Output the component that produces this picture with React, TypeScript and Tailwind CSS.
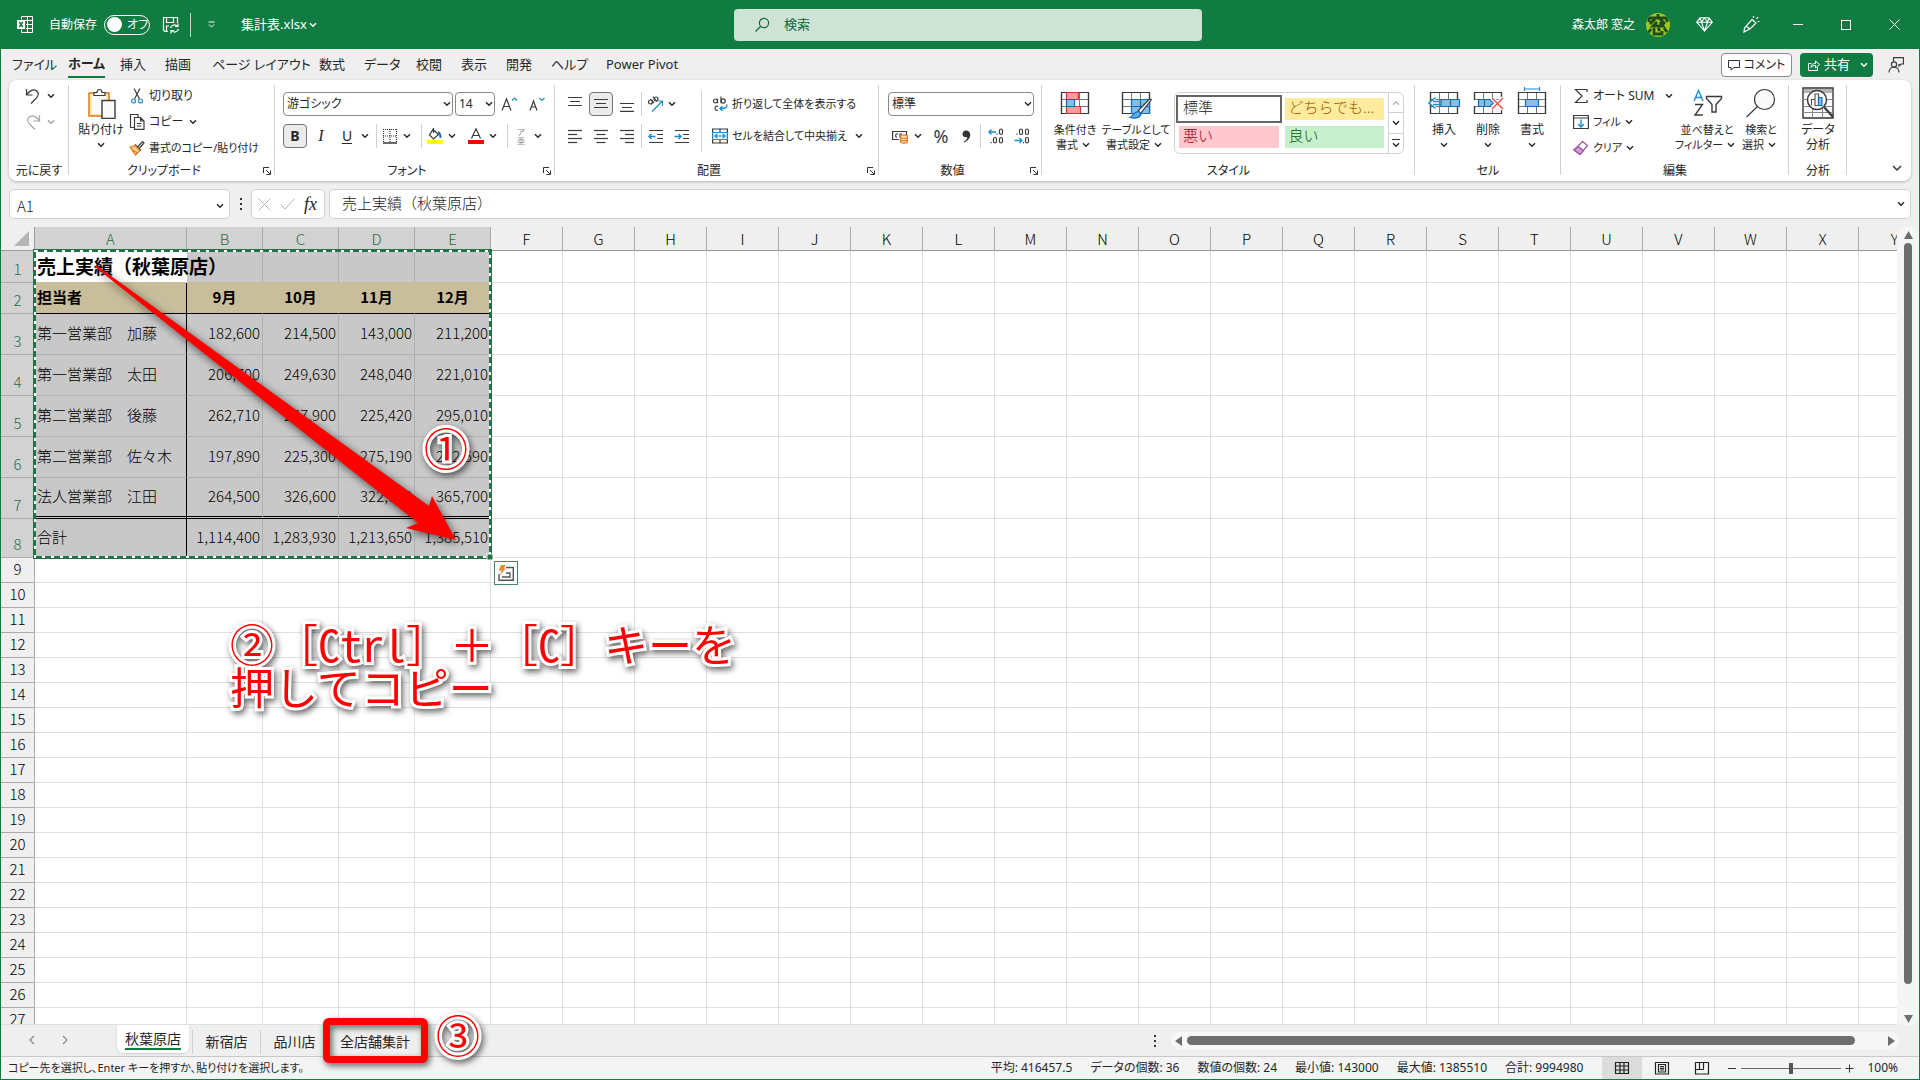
import type { ReactNode } from "react";
import clsx from "clsx";

const tabs = [
  { name: "ファイル", width: "w-14" },
  { name: "ホーム", width: "w-[52px]" },
  { name: "挿入", width: "w-[45px]" },
  { name: "描画", width: "w-[47px]" },
  { name: "ページ レイアウト", width: "w-[107px]" },
  { name: "数式", width: "w-[45px]" },
  { name: "データ", width: "w-[52px]" },
  { name: "校閲", width: "w-[45px]" },
  { name: "表示", width: "w-[45px]" },
  { name: "開発", width: "w-[45px]" },
  { name: "ヘルプ", width: "w-[55px]" },
  { name: "Power Pivot", width: "w-24" },
];

const columns = "ABCDEFGHIJKLMNOPQRSTUVWXY".split("");

const rows: string[][] = [
  ["売上実績（秋葉原店）"],
  ["担当者", "9月", "10月", "11月", "12月"],
  ["第一営業部　加藤", "182,600", "214,500", "143,000", "211,200"],
  ["第一営業部　太田", "206,700", "249,630", "248,040", "221,010"],
  ["第二営業部　後藤", "262,710", "267,900", "225,420", "295,010"],
  ["第二営業部　佐々木", "197,890", "225,300", "275,190", "292,590"],
  ["法人営業部　江田", "264,500", "326,600", "322,000", "365,700"],
  ["合計", "1,114,400", "1,283,930", "1,213,650", "1,385,510"],
];

const stats = ["平均: 416457.5", "データの個数: 36", "数値の個数: 24", "最小値: 143000", "最大値: 1385510", "合計: 9994980"];

function rowHeight(row: number) {
  if (row === 1) return "h-8";
  if (row === 2) return "h-[31px]";
  if (row <= 7) return "h-[41px]";
  if (row === 8) return "h-[39px]";
  return "h-[25px]";
}

function Chev({ className = "w-4" }: { className?: string }) {
  return (
    <span className={clsx("flex shrink-0 justify-center", className)}>
      <svg width="8" height="6" viewBox="0 0 8 6" fill="none" stroke="currentColor" strokeWidth="1.4">
        <path d="M1 1.2l3 3 3-3" />
      </svg>
    </span>
  );
}

function Icon({ size = 16, children }: { size?: number; children: ReactNode }) {
  return (
    <svg className="shrink-0" width={size} height={size} viewBox={`0 0 ${size} ${size}`} fill="none" stroke="#3b3b3b" strokeWidth="1.2">
      {children}
    </svg>
  );
}

function Sep({ className = "mx-[5px]" }: { className?: string }) {
  return <span className={clsx("h-6 w-px shrink-0 bg-[#d1d1d1]", className)} />;
}

function Group({ label, width, launcher, children }: { label: string; width: string; launcher?: boolean; children: ReactNode }) {
  return (
    <section className={clsx("relative mt-[3px] flex shrink-0 flex-col", width)} aria-label={label}>
      <div className="flex h-[82px]">{children}</div>
      <div className={clsx("flex h-3 items-center justify-center whitespace-nowrap", launcher && "pr-4")}>{label}</div>
      {launcher && (
        <button className="absolute right-1 top-[84px]" aria-label={`${label}の設定`}>
          <svg width="8" height="8" viewBox="0 0 8 8" fill="none" stroke="#333">
            <path d="M.5 6V.5H6M3 3l4 4M7.5 3.5v4h-4" />
          </svg>
        </button>
      )}
      <span className="absolute right-0 top-[2px] h-[90px] w-px bg-[#d1d1d1]" />
    </section>
  );
}

function BigButton({ lines, width, chevron, children }: { lines: string[]; width: string; chevron?: "below" | "inline"; children: ReactNode }) {
  return (
    <button
      className={clsx("flex shrink-0 flex-col items-center whitespace-nowrap pt-1 leading-[15px]", chevron === "inline" && "text-[11px]", width)}
    >
      <Icon size={32}>{children}</Icon>
      <span className="mt-[3px]">{lines[0]}</span>
      {lines[1] && (
        <span className="flex items-center">
          {lines[1]}
          {chevron === "inline" && <Chev />}
        </span>
      )}
      {chevron === "below" && (
        <span className="flex h-[15px] items-center">
          <Chev />
        </span>
      )}
    </button>
  );
}

function IconButton({ label, width = "w-6", active, children }: { label: string; width?: string; active?: boolean; children: ReactNode }) {
  return (
    <button
      aria-label={label}
      className={clsx("flex h-6 shrink-0 items-center justify-center", width, active && "rounded border border-[#767676] bg-[#ebebeb]")}
    >
      {children}
    </button>
  );
}

function Combo({ label, value, width }: { label: string; value: string; width: string }) {
  return (
    <div className={clsx("relative shrink-0", width)}>
      <select aria-label={label} className="h-6 w-full appearance-none rounded border border-[#8a8a8a] bg-white pl-[3px] pr-3 leading-5">
        <option>{value}</option>
      </select>
      <span className="pointer-events-none absolute right-0 top-[9px]">
        <Chev className="w-3" />
      </span>
    </div>
  );
}

function TitleBar() {
  return (
    <header className="flex h-[49px] shrink-0 items-center bg-[#107c41] text-white">
      <div className="flex flex-1 items-center pl-4">
        <svg width="16" height="17" viewBox="0 0 16 17" fill="none" stroke="#fff">
          <path d="M4.5 3.500V.5h11v16h-11v-3M4.500 4.500h11M10.500.5v16M9 8.500h6.500M9 12.500h6.500" />
          <path fill="#fff" stroke="none" d="M0 4h8v9H0z" />
          <path stroke="#107c41" strokeWidth="1.500" d="M2.300 6l3.500 5M5.800 6l-3.500 5" />
        </svg>
        <label className="ml-4 flex items-center gap-[7px]">
          自動保存
          <input type="checkbox" role="switch" className="peer sr-only" />
          <span className="flex h-5 w-[46px] items-center gap-[5px] rounded-full border border-white pl-[2px]">
            <span className="size-[15px] rounded-full bg-white" />
            オフ
          </span>
        </label>
        <button className="ml-3" aria-label="上書き保存">
          <svg width="18" height="18" viewBox="0 0 18 18" fill="none" stroke="#fff" strokeWidth="1.200">
            <path d="M6 15.500H3L1.500 14V1.500h14V7M4.500 1.500v5h7v-5M4.500 15v-5H7" />
            <path d="M8.500 12a4 4 0 017-1.500M16 7.500v3h-3M16.500 13a4 4 0 01-7 1.500M9 17.500v-3h3" />
          </svg>
        </button>
        <Sep className="ml-[10px] mr-3" />
        <button className="w-4" aria-label="クイック アクセス ツール バーのカスタマイズ">
          <svg className="mx-auto" width="7" height="7" viewBox="0 0 7 7" fill="none" stroke="#fff">
            <path d="M.5 1h6M1 3.500l2.500 2.500L6 3.500" />
          </svg>
        </button>
        <button className="ml-[22px] flex items-center text-[13px]">
          集計表.xlsx
          <Chev className="w-3" />
        </button>
      </div>
      <label className="flex h-8 w-[468px] items-center gap-[14px] rounded bg-[#cfe2d6] pl-5 text-[#0e6937]">
        <Icon>
          <g stroke="#0e6937">
            <circle cx="10" cy="6" r="4.600" />
            <path d="M6.500 9.500L1.500 14.500" />
          </g>
        </Icon>
        <input aria-label="検索" placeholder="検索" className="flex-1 bg-transparent text-[13px] placeholder:text-[#0e6937]" />
      </label>
      <div className="flex flex-1 items-center justify-end">
        <span>森太郎 窓之</span>
        <span className="ml-[11px] flex size-6 items-center justify-center overflow-hidden rounded-full bg-[#9bc827]">
          <svg width="24" height="24" viewBox="0 0 24 24" fill="none" stroke="#1f4a1c" strokeWidth="2.800">
            <path d="M3 9V5h18v4M12 1v4M9 6l-5 5M14 6l5 5M11 9l-4 4h10l-3-4M5 16l-3 4M8 15v6h8v-3M12 15l2 3M18 15l3 4" />
          </svg>
        </span>
        <button className="ml-[26px]" aria-label="プレミアム">
          <svg width="17" height="15" viewBox="0 0 17 15" fill="none" stroke="#fff" strokeWidth="1.100">
            <path d="M4 .8h9l3.300 4.400L8.500 14 .7 5.200zM.7 5.200h15.600M4 .8l1.500 4.400 3 8.800 3-8.800L13 .8M5.500 5.200l3-4.400 3 4.400" />
          </svg>
        </button>
        <button className="ml-[30px]" aria-label="新機能">
          <svg width="17" height="17" viewBox="0 0 17 17" fill="none" stroke="#fff" strokeWidth="1.200">
            <path d="M9 3.500l4 3.500-5.500 5.500-6.500 3.500.5-4zM3 10l4 3M10.500 2V0M13.500 3l1.500-2M14.500 5.500h2" />
          </svg>
        </button>
        <button className="ml-[33px] h-px w-[10px] bg-white" aria-label="最小化" />
        <button className="ml-[38px] size-[10px] border border-white" aria-label="元のサイズ" />
        <button className="ml-[38px] mr-[19px]" aria-label="閉じる">
          <svg width="11" height="11" viewBox="0 0 11 11" stroke="#fff">
            <path d="M.5.5l10 10M10.500.5l-10 10" />
          </svg>
        </button>
      </div>
    </header>
  );
}

function TabBar() {
  return (
    <nav className="flex h-[31px] shrink-0 items-center pl-[11px] text-[13px]">
      {tabs.map((tab) => (
        <button key={tab.name} className={clsx("flex shrink-0 whitespace-nowrap", tab.width)}>
          <span className={clsx("pb-[2px] pt-[3px]", tab.name === "ホーム" && "border-b-2 border-[#107c41] font-bold")}>{tab.name}</span>
        </button>
      ))}
      <div className="ml-auto flex items-center pr-[15px]">
        <button className="flex h-6 w-[71px] items-center justify-center gap-1 rounded border border-[#8a8a8a] bg-white text-[12px]">
          <svg width="12" height="12" viewBox="0 0 12 12" fill="none" stroke="#333">
            <path d="M.5 1.500h11v7H6l-3 2.500V8.500H.5z" />
          </svg>
          コメント
        </button>
        <button className="ml-2 flex h-6 w-[73px] items-center rounded bg-[#107c41] pl-2 text-white">
          <svg width="12" height="12" viewBox="0 0 12 12" fill="none" stroke="#fff">
            <path d="M3.500 4.500h-3v7h9v-3M3 8.500c0-3 2-4 4.500-4V2l4 3.500-4 3.500V6.500C5.500 6.500 4 7 3 8.500z" />
          </svg>
          <span className="ml-1">共有</span>
          <Chev className="ml-auto w-[18px]" />
        </button>
        <button className="ml-[15px]" aria-label="フィードバック">
          <Icon>
            <path d="M5.500 4.500V.6h10V7H13l-2 2V7" />
            <circle cx="6" cy="7.500" r="2.600" />
            <path d="M1 15.500c0-7 10-7 10 0" />
          </Icon>
        </button>
      </div>
    </nav>
  );
}

function GridLines() {
  return (
    <>
      <path fill="#fff" d="M2.500 5.500h27v21h-27z" />
      <path stroke="#777" strokeWidth="1" d="M2.500 12.500h27M2.500 19.500h27M11.500 5.500v21M20.500 5.500v21" />
      <path strokeWidth="1.200" d="M2.500 5.500h27v21h-27z" />
    </>
  );
}

function AlignIcon({ widths, offset = "center" }: { widths: number[]; offset?: "left" | "center" | "right" }) {
  return (
    <Icon>
      {widths.map((w, i) => {
        const x = offset === "left" ? 1 : offset === "right" ? 15 - w : 8 - w / 2;
        return <path key={i} d={`M${x} ${2.5 + i * 4}h${w}`} />;
      })}
    </Icon>
  );
}

function Ribbon() {
  return (
    <div className="mx-2 flex h-[101px] shrink-0 rounded-lg bg-white text-[12px] shadow-[0_1px_3px_rgba(0,0,0,0.25)]">
      <Group label="元に戻す" width="w-[60px]">
        <div className="flex flex-col pl-4">
          <button className="flex h-[26px] items-center" aria-label="元に戻す">
            <Icon>
              <path d="M1.500 1v6h6M1.500 7C4 3 8 .8 11 2.500c4 2.500 2 6-.5 8.500L6 15.500" />
            </Icon>
            <Chev className="w-5" />
          </button>
          <button className="flex h-[26px] items-center text-[#a6a6a6]" aria-label="やり直し">
            <Icon>
              <path stroke="#a6a6a6" d="M14.500 1v6h-6M14.500 7C12 3 8 .8 5 2.500c-4 2.500-2 6 .5 8.500L10 15.500" />
            </Icon>
            <Chev className="w-5" />
          </button>
        </div>
      </Group>

      <Group label="クリップボード" width="w-[206px]" launcher>
        <BigButton lines={["貼り付け"]} width="w-16" chevron="below">
          <path fill="#fde9a9" stroke="#e07b1a" strokeWidth="1.500" d="M4 6h20v23H4z" />
          <path fill="#fafafa" stroke="none" d="M7 8h14v19H7z" />
          <path fill="#fafafa" d="M9 8.500V5.500h3c0-4 5-4 5 0h3v3z" />
          <path fill="#fafafa" strokeWidth="1.400" d="M17 13.500h13v18H17z" />
        </BigButton>
        <div className="-ml-1 flex flex-col">
          <button className="flex h-[26px] items-center gap-1 whitespace-nowrap">
            <Icon>
              <path d="M5 .5l5.500 10.500M11 .5L5.500 11" />
              <circle cx="4.500" cy="13" r="2" stroke="#1e8bcd" />
              <circle cx="11.500" cy="13" r="2" stroke="#1e8bcd" />
            </Icon>
            切り取り
          </button>
          <button className="flex h-[26px] items-center gap-1 whitespace-nowrap">
            <Icon>
              <path d="M5 13.500H1.500v-13H9V3" />
              <path d="M5.500 3.500h6l3.500 3.500v8.400H5.500zM11.500 3.500V7H15M8 9.500h4.500M8 12h4.500" />
            </Icon>
            コピー
            <Chev className="w-3" />
          </button>
          <button className="flex h-[26px] items-center gap-1 whitespace-nowrap text-[11px]">
            <Icon>
              <path d="M9 6.500L13.500 1.500l1.500 1.500-4.500 5M6 4.500l6 6" />
              <path fill="#fbd08f" stroke="#e07b1a" d="M1 7l5-1.500 5 5L6.500 15zM3 10l5 2.500" />
            </Icon>
            書式のコピー/貼り付け
          </button>
        </div>
      </Group>

      <Group label="フォント" width="w-[280px]" launcher>
        <div className="flex flex-col pl-2 pt-[5px]">
          <div className="flex h-8 items-center">
            <Combo label="フォント" value="游ゴシック" width="w-[170px]" />
            <span className="w-[2px]" />
            <Combo label="フォント サイズ" value="14" width="w-10" />
            <IconButton label="フォント サイズの拡大" width="w-7">
              <Icon size={18}>
                <path d="M2 15.500L6.500 4 11 15.500M3.500 11.500h6" />
                <path stroke="#1e8bcd" d="M12 5.500l2.500-2.500L17 5.500" />
              </Icon>
            </IconButton>
            <IconButton label="フォント サイズの縮小" width="w-7">
              <Icon size={18}>
                <path d="M2 15.500L5.500 6 9 15.500M3.200 12h4.600" />
                <path stroke="#1e8bcd" d="M11.500 3l2.500 2.500L16.500 3" />
              </Icon>
            </IconButton>
          </div>
          <div className="flex h-8 items-center">
            <IconButton label="太字" active>
              <span className="text-sm font-bold">B</span>
            </IconButton>
            <IconButton label="斜体" width="w-7">
              <span className="font-['Liberation_Serif',serif] text-base italic">I</span>
            </IconButton>
            <IconButton label="下線">
              <span className="text-sm underline underline-offset-2">U</span>
            </IconButton>
            <Chev className="w-3" />
            <Sep />
            <Icon>
              <path strokeDasharray="1 1" d="M1.500 1v13M14.500 1v13M8 1v13M1 1.500h14M1 8h14" />
              <path strokeWidth="1.500" d="M1 15h14" />
            </Icon>
            <Chev className="w-[18px]" />
            <Sep />
            <Icon>
              <path d="M6 1.500l5.500 5-5 4.500L2.500 7zM6.500 5V0" />
              <path stroke="#1e6fb8" strokeWidth="2" d="M11 4c2 1 2.500 3 2.500 6" />
              <path fill="#ff0" stroke="none" d="M0 12h16v4H0z" />
            </Icon>
            <Chev className="w-[18px]" />
            <span className="w-[7px]" />
            <Icon>
              <path d="M3.500 10.500L8 .8l4.500 9.700M5 7.500h6" />
              <path fill="red" stroke="none" d="M0 12h16v4H0z" />
            </Icon>
            <Chev className="w-[18px]" />
            <Sep />
            <IconButton label="ふりがな" width="w-4">
              <span className="flex flex-col text-center text-[8px] leading-[9px] text-[#8a8a8a]">
                <span>ア</span>
                <span>亜</span>
              </span>
            </IconButton>
            <Chev className="w-[18px]" />
          </div>
        </div>
      </Group>

      <Group label="配置" width="w-[324px]" launcher>
        <div className="flex w-[146px] flex-col pl-2 pt-[5px]">
          <div className="flex h-8 items-center">
            <div className="flex gap-[2px]">
              <IconButton label="上揃え">
                <Icon>
                  <path d="M1 1.500h14M3 5.500h10M1 9.500h14" />
                </Icon>
              </IconButton>
              <IconButton label="上下中央揃え" active>
                <Icon>
                  <path d="M1 3.500h14M3 7.500h10M1 11.500h14" />
                </Icon>
              </IconButton>
              <IconButton label="下揃え">
                <Icon>
                  <path d="M1 7.500h14M3 11.500h10M1 15.400h14" />
                </Icon>
              </IconButton>
            </div>
            <Sep className="mx-[2px]" />
            <IconButton label="方向" width="w-[22px]">
              <Icon>
                <circle cx="3.500" cy="6" r="2" />
                <path d="M3.500 3l3.500 4M6 .5l4 5" />
                <circle cx="9" cy="3" r="2" />
                <path stroke="#1e8bcd" d="M5 15.500L15 5.500M10.500 5H15.500v5" />
              </Icon>
            </IconButton>
            <Chev className="w-3" />
          </div>
          <div className="flex h-8 items-center">
            <div className="flex gap-[2px]">
              <IconButton label="左揃え">
                <AlignIcon widths={[14, 9, 14, 9]} offset="left" />
              </IconButton>
              <IconButton label="中央揃え">
                <AlignIcon widths={[14, 9, 14, 9]} />
              </IconButton>
              <IconButton label="右揃え">
                <AlignIcon widths={[14, 9, 14, 9]} offset="right" />
              </IconButton>
            </div>
            <Sep className="mx-[2px]" />
            <div className="flex gap-[2px]">
              <IconButton label="インデントを減らす">
                <Icon>
                  <path d="M1 2.500h14M9 6.500h6M9 10.500h6M1 14.500h14" />
                  <path stroke="#1e8bcd" strokeWidth="1.400" d="M7.500 8.500H1M3.500 6L1 8.500 3.500 11" />
                </Icon>
              </IconButton>
              <IconButton label="インデントを増やす">
                <Icon>
                  <path d="M1 2.500h14M9 6.500h6M9 10.500h6M1 14.500h14" />
                  <path stroke="#1e8bcd" strokeWidth="1.400" d="M.5 8.500H7M4.500 6L7 8.500 4.500 11" />
                </Icon>
              </IconButton>
            </div>
          </div>
        </div>
        <div className="mt-2 h-[61px] w-px bg-[#d1d1d1]" />
        <div className="flex flex-col pl-[10px] pt-[5px] text-[11px]">
          <button className="flex h-8 items-center gap-1 whitespace-nowrap">
            <Icon>
              <circle cx="3.500" cy="5" r="2" />
              <path d="M5.500 2.800v4.500M9 .5v6.800M6 10.500c-4-2-4 5.500 0 3.500" />
              <circle cx="11.200" cy="5" r="2.100" />
              <path stroke="#1e8bcd" strokeWidth="1.400" d="M15 8.500c0 4-2 4-7 4M10.500 10L8 12.500l2.500 2.500" />
            </Icon>
            折り返して全体を表示する
          </button>
          <button className="flex h-8 items-center gap-1 whitespace-nowrap">
            <Icon>
              <path d="M.6 1h14.800v14H.6zM.6 4.500h14.800M.6 11.500h14.800M8 1v3.500M8 11.500V15" />
              <path fill="#eaf4fb" stroke="#1e8bcd" d="M.6 4.500h14.800v7H.6zM3 8h10M5 6L3 8l2 2M11 6l2 2-2 2" />
            </Icon>
            セルを結合して中央揃え
            <Chev />
          </button>
        </div>
      </Group>

      <Group label="数値" width="w-[163px]" launcher>
        <div className="flex flex-col pl-[9px] pt-[5px]">
          <div className="flex h-8 items-center">
            <Combo label="数値の書式" value="標準" width="w-[146px]" />
          </div>
          <div className="flex h-8 items-center pl-1">
            <Icon>
              <path d="M14.500 8V3.500H.6v8H7M6 6c-3-1-3 3.500-1 3M8 9.500V6h2" />
              <path fill="#fde0bd" stroke="#e07b1a" d="M8.500 8c0-1.500 7-1.500 7 0v6c0 1.500-7 1.500-7 0zM8.500 9.500c1 1 6 1 7 0M8.500 12c1 1 6 1 7 0" />
            </Icon>
            <Chev className="w-5" />
            <IconButton label="パーセント スタイル" width="w-[26px]">
              <span className="text-lg leading-none text-[#3b3b3b]">%</span>
            </IconButton>
            <IconButton label="桁区切りスタイル">
              <svg width="9" height="13" viewBox="0 0 9 13" fill="#333">
                <path d="M4 .5c6 0 6 9-2 12l-.5-.8C4.500 10 5.500 8.500 5 7 2.500 8 .5 6.500.5 4 .5 2 2 .5 4 .5z" />
              </svg>
            </IconButton>
            <Sep className="mx-[2px]" />
            <IconButton label="小数点以下の表示桁数を増やす" width="w-[26px]">
              <Icon>
                <rect x="11.500" y="1" width="3" height="5.500" rx="1.500" />
                <rect x="5.500" y="9.500" width="3" height="5.500" rx="1.500" />
                <rect x="11.500" y="9.500" width="3" height="5.500" rx="1.500" />
                <path d="M3 14v1.200M9 5.500v1.200" />
                <path stroke="#1e8bcd" strokeWidth="1.400" d="M8 4H1M3.500 1.500L1 4l2.500 2.500" />
              </Icon>
            </IconButton>
            <IconButton label="小数点以下の表示桁数を減らす" width="w-[26px]">
              <Icon>
                <rect x="5.500" y="1" width="3" height="5.500" rx="1.500" />
                <rect x="11.500" y="1" width="3" height="5.500" rx="1.500" />
                <rect x="11.500" y="9.500" width="3" height="5.500" rx="1.500" />
                <path d="M3 5.500v1.200M9.500 14v1.200" />
                <path stroke="#1e8bcd" strokeWidth="1.400" d="M.5 12.500h7.500M5.500 10L8 12.500 5.500 15" />
              </Icon>
            </IconButton>
          </div>
        </div>
      </Group>

      <Group label="スタイル" width="w-[373px]">
        <div className="flex pl-1">
          <BigButton lines={["条件付き", "書式"]} width="w-[58px]" chevron="inline">
            <GridLines />
            <path fill="#ff9a9a" stroke="#d13438" d="M7.500 5.500h12v7h-12zM7.500 19.500h14v7h-14z" />
            <path fill="#83beec" stroke="#0f6cbd" d="M7.500 12.500h8v7h-8z" />
          </BigButton>
          <BigButton lines={["テーブルとして", "書式設定"]} width="w-16" chevron="inline">
            <GridLines />
            <path fill="#83beec" stroke="#0f6cbd" d="M11.500 12.500h18v14h-18zM11.500 19.500h18M20.500 12.500v14" />
            <path fill="#fff" d="M31.500 12.500l-2-.5L18 24l2.500 2.500z" />
            <path fill="#5ea9e0" stroke="#0f6cbd" d="M19 24.500l2 2.500c-1 4-7 5-11 3.500 3-1 3-6 9-6z" />
          </BigButton>
        </div>
        <div className="ml-[6px] mt-[9px] flex h-[62px] w-[230px] rounded-md border border-[#d1d1d1]">
          <div className="grid flex-1 grid-cols-2 grid-rows-2 gap-[6px] px-1 py-[5px] font-['Noto_Sans_CJK_JP',sans-serif] text-[15px] font-light leading-[18px] [font-feature-settings:normal]">
            <button className="bg-white pb-1 pl-1 text-left outline-2 outline-offset-1 outline-[#666]">標準</button>
            <button className="whitespace-nowrap bg-[#ffeb9c] pb-1 pl-1 text-left text-[#9c5700]">どちらでも...</button>
            <button className="bg-[#ffc7ce] pb-1 pl-1 text-left text-[#9c0006]">悪い</button>
            <button className="bg-[#c6efce] pb-1 pl-1 text-left text-[#006100]">良い</button>
          </div>
          <div className="flex w-[15px] flex-col divide-y divide-[#d1d1d1] border-l border-[#d1d1d1]">
            <button className="flex flex-1 items-center text-[#b5b5b5]" aria-label="前の行">
              <Chev className="w-full rotate-180" />
            </button>
            <button className="flex flex-1 items-center" aria-label="次の行">
              <Chev className="w-full" />
            </button>
            <button className="flex flex-1 flex-col items-center justify-center gap-[2px]" aria-label="その他">
              <span className="h-px w-2 bg-[#333]" />
              <Chev className="w-full" />
            </button>
          </div>
        </div>
      </Group>

      <Group label="セル" width="w-[146px]">
        <div className="flex pl-[7px]">
          <BigButton lines={["挿入"]} width="w-11" chevron="below">
            <GridLines />
            <path fill="#83beec" stroke="#0f6cbd" d="M13 12.500h18.500v7H13zM22.500 12.500v7" />
            <path fill="#fff" stroke="#1e8bcd" strokeWidth="1.500" d="M14 14.500H5M14 17.500H5M7.500 10.500L1 16l6.500 5.500" />
          </BigButton>
          <BigButton lines={["削除"]} width="w-11" chevron="below">
            <GridLines />
            <path fill="#fff" stroke="none" d="M1 13h30v6H1z" />
            <path fill="#83beec" stroke="#0f6cbd" d="M6.500 12.500h11l4 3.500-4 3.500h-11zM12.500 12.500v7" />
            <path stroke="#fff" strokeWidth="4" d="M20 11l11 11M31 11L20 22" />
            <path stroke="#f0504f" strokeWidth="1.500" d="M20 11l11 11M31 11L20 22" />
          </BigButton>
          <BigButton lines={["書式"]} width="w-11" chevron="below">
            <GridLines />
            <path fill="#83beec" stroke="#0f6cbd" d="M9.500 12.500h13v7h-13z" />
            <path stroke="#1e8bcd" d="M8.500 2h15M8.500 0v4M23.500 0v4" />
          </BigButton>
        </div>
      </Group>

      <Group label="編集" width="w-[228px]">
        <div className="flex w-[116px] flex-col pl-3">
          <button className="flex h-[26px] items-center gap-1 whitespace-nowrap">
            <Icon>
              <path d="M14 4V1.500H2.500L9 8l-6.500 6.500H14V12" />
            </Icon>
            オート SUM
            <Chev className="ml-auto w-4" />
          </button>
          <button className="flex h-[26px] items-center gap-1 whitespace-nowrap text-[11px]">
            <Icon>
              <path d="M.6 1.500h14.800v13H.6zM.6 4h14.800" />
              <path stroke="#1e8bcd" strokeWidth="1.400" d="M8 5.500V13M5 10l3 3 3-3" />
            </Icon>
            フィル
            <Chev className="w-2" />
          </button>
          <button className="flex h-[26px] items-center gap-1 whitespace-nowrap text-[11px]">
            <Icon>
              <path stroke="#9b4f9f" fill="#fff" d="M9.500 1.500l5 4-7.500 9-6-4.500z" />
              <path stroke="#9b4f9f" fill="#d59ed7" d="M5 6.500l5.500 4.200L7 14.500l-6-4.500z" />
            </Icon>
            クリア
            <Chev className="w-2" />
          </button>
        </div>
        <BigButton lines={["並べ替えと", "フィルター"]} width="w-[60px]" chevron="inline">
          <path stroke="#1e8bcd" strokeWidth="1.400" d="M3 14L7.500 3.500 12 14M4.500 10.500h6" />
          <path strokeWidth="1.400" d="M4 17.500h7.500L4 28h8" />
          <path fill="#fff" strokeWidth="1.400" d="M15.500 9.500h15v2l-5.500 6v7.500h-4v-7.500l-5.500-6z" />
        </BigButton>
        <BigButton lines={["検索と", "選択"]} width="w-12" chevron="inline">
          <circle cx="19.500" cy="12.500" r="10" fill="#fafafa" />
          <path d="M12.500 19.500L1.500 30" />
        </BigButton>
      </Group>

      <Group label="分析" width="w-[58px]">
        <BigButton lines={["データ", "分析"]} width="w-full">
          <path fill="#fafafa" stroke="#333" strokeWidth="1.400" d="M1 1h30v30H1z" />
          <path fill="#b5b5b5" stroke="none" d="M2 2h28v4H2z" />
          <path stroke="#888" strokeWidth="1" d="M1 12.500h30M1 19.500h30M1 25.500h30M10.500 19v12M20.500 19v12" />
          <circle cx="15" cy="13" r="9.500" fill="#fff" strokeWidth="1.500" />
          <path stroke="#555" d="M9.500 18.500v-6h3.500v6M13 18.500V7h3.500v11.500z" />
          <path fill="#83beec" stroke="#0f6cbd" d="M16.500 10.500H20v8h-3.500z" />
          <path strokeWidth="2.200" d="M22 20l9 10" />
        </BigButton>
      </Group>

      <button className="ml-auto mr-[9px] mt-[84px] flex h-2 items-center" aria-label="リボンを折りたたむ">
        <svg width="10" height="7" viewBox="0 0 10 7" fill="none" stroke="#333" strokeWidth="1.500">
          <path d="M1 1l4 4 4-4" />
        </svg>
      </button>
    </div>
  );
}

function FormulaBar() {
  return (
    <div className="mx-2 mt-2 flex h-[30px] shrink-0 font-['Noto_Sans_CJK_JP',sans-serif] [font-feature-settings:normal]">
      <div className="relative w-[221px]">
        <input
          aria-label="名前ボックス"
          defaultValue="A1"
          className="h-full w-full rounded border border-[#d1d1d1] bg-white px-[7px] pt-[2px] text-[15px] font-light text-[#222]"
        />
        <button className="absolute right-1 top-[14px]" aria-label="名前の一覧">
          <Chev className="w-3" />
        </button>
      </div>
      <div className="flex w-[21px] flex-col items-center justify-center gap-[3px]">
        <span className="size-[2px] bg-[#333]" />
        <span className="size-[2px] bg-[#333]" />
        <span className="size-[2px] bg-[#333]" />
      </div>
      <div className="flex w-[74px] items-center gap-[9px] rounded border border-[#d1d1d1] bg-white pl-[6px]">
        <button aria-label="キャンセル">
          <svg width="13" height="13" viewBox="0 0 13 13" stroke="#b5b5b5">
            <path d="M.5.5l12 12M12.500.5l-12 12" />
          </svg>
        </button>
        <button aria-label="入力">
          <svg width="15" height="12" viewBox="0 0 15 12" fill="none" stroke="#b5b5b5">
            <path d="M.5 6.500l4.500 4.500L14.500.8" />
          </svg>
        </button>
        <button className="font-['Liberation_Serif',serif] text-lg italic leading-none text-[#222]">fx</button>
      </div>
      <div className="relative ml-1 flex-1">
        <input
          aria-label="数式バー"
          defaultValue="売上実績（秋葉原店）"
          className="h-full w-full rounded border border-[#d1d1d1] bg-white px-3 pb-1 text-[15px] font-light text-[#222]"
        />
        <button className="absolute right-1 top-3" aria-label="数式バーの展開">
          <Chev className="w-3" />
        </button>
      </div>
    </div>
  );
}

function cellClass(row: number, col: number) {
  if (row > 8 || col > 4) return "border-[#dfdfdf]";
  return clsx(
    row === 2 && "border-b-black bg-[#c8be9c] font-bold",
    row === 1 && (col === 0 ? "border-[#c8be9c] border-r-white bg-white font-bold" : "border-[#b0b0b0] border-b-[#c8be9c] bg-[#c8c8c8]"),
    row > 2 && "bg-[#c8c8c8] font-light",
    row > 2 && row !== 7 && "border-b-[#b0b0b0]",
    row === 7 && "border-b-[3px] border-double border-b-black",
    row > 1 && col === 0 && "border-r-black",
    row === 2 && col > 0 && "border-r-[#c8be9c]",
    row > 2 && col > 0 && "border-r-[#b0b0b0]",
    col > 0 && (row === 2 ? "text-center" : "pr-[2px] text-right"),
  );
}

function Sheet() {
  const rowNumbers = Array.from({ length: 27 }, (_, i) => i + 1);

  return (
    <div className="relative mt-2 min-h-0 flex-1 overflow-hidden border-b border-[#dfdfdf] font-['Noto_Sans_CJK_JP',sans-serif] text-[15px] [font-feature-settings:normal]">
      <table className="w-max table-fixed border-separate border-spacing-0 bg-white text-black">
        <colgroup>
          <col className="w-[34px]" />
          {columns.map((c, i) => (
            <col key={c} className={i === 0 ? "w-[152px]" : i < 5 ? "w-[76px]" : "w-[72px]"} />
          ))}
        </colgroup>
        <thead>
          <tr className="h-6">
            <th className="w-[34px] border-b border-r border-[#9a9a9a] bg-[#efefef] p-0">
              <svg className="ml-3" width="17" height="17" viewBox="0 0 17 17" fill="#b5b5b5">
                <path d="M16 1v15H1z" />
              </svg>
            </th>
            {columns.map((c, i) => (
              <th
                key={c}
                className={clsx(
                  "border-b border-r border-b-[#9a9a9a] border-r-[#ababab] p-0 font-light leading-5",
                  i < 5 ? "bg-[#d2d2d2] text-[#1f6f47]" : "bg-[#efefef]",
                  i === 0 ? "w-[152px]" : i < 5 ? "w-[76px]" : "w-[72px]",
                )}
              >
                {c}
              </th>
            ))}
          </tr>
        </thead>
        <tbody>
          {rowNumbers.map((row) => (
            <tr key={row} className={rowHeight(row)}>
              <th
                className={clsx(
                  "border-b border-r border-[#ababab] p-0 pb-[2px] align-bottom font-light leading-[22px]",
                  row < 9 ? "bg-[#d2d2d2] text-[#1f6f47]" : "bg-[#efefef]",
                )}
              >
                {row}
              </th>
              {columns.map((c, col) => (
                <td
                  key={c}
                  className={clsx(
                    "whitespace-nowrap border-b border-r p-0 pb-[2px] leading-5",
                    col === 0 && "pl-[2px]",
                    cellClass(row, col),
                  )}
                >
                  {row === 1 && col === 0 ? (
                    <span className="relative block w-0 text-[19px]">{rows[0][0]}</span>
                  ) : (
                    rows[row - 1]?.[col]
                  )}
                </td>
              ))}
            </tr>
          ))}
        </tbody>
      </table>

      {/* copy marquee and fill handle */}
      <svg className="pointer-events-none absolute left-0 top-0" width="500" height="340" viewBox="0 0 500 340" fill="none">
        <rect x="33.500" y="23.500" width="456" height="307" stroke="#217346" strokeWidth="3" />
        <rect x="34" y="24" width="455" height="306" stroke="#fff" strokeWidth="2" strokeDasharray="3 6" />
        <rect x="486" y="327" width="6" height="6" fill="#217346" stroke="#fff" />
      </svg>
      <button className="absolute left-[493px] top-[334px] flex size-6 items-center justify-center border border-[#3f8a63] bg-white" aria-label="クイック分析">
        <Icon>
          <path strokeWidth="1.400" stroke="#555" d="M8 2.500h7.300v12.800H1V9M4 12h8V8H8" />
          <path fill="#f0882d" stroke="none" d="M3 0h4.500L6 3.500h2L2 10l1.500-4.500H.5z" />
        </Icon>
      </button>

      {/* callouts */}
      <svg className="pointer-events-none absolute left-0 top-0 drop-shadow-[2px_3px_4px_rgba(0,0,0,0.6)]" width="500" height="340" viewBox="0 0 500 340">
        <path fill="red" d="M95 38L428 279 431 269 455 313 405 301 417 296 94 40z" />
      </svg>
      <Callout className="left-[423px] top-[199px]">①</Callout>
      <Callout className="left-[229px] top-[395px]">
        ②［<span className="[font-feature-settings:'hwid']">Ctrl</span>］＋［<span className="[font-feature-settings:'hwid']">C</span>］キーを
        <br />
        押してコピー
      </Callout>
    </div>
  );
}

function Callout({ className, children }: { className: string; children: ReactNode }) {
  return (
    <p
      className={clsx(
        "pointer-events-none absolute whitespace-nowrap font-['Noto_Sans_CJK_JP',sans-serif] text-[44px] leading-[43px] text-[red] drop-shadow-[2px_3px_3px_rgba(0,0,0,0.6)] [-webkit-text-stroke:6px_white] [font-feature-settings:normal] [paint-order:stroke_fill]",
        className,
      )}
    >
      {children}
    </p>
  );
}

function VerticalScroll() {
  return (
    <div className="mt-2 flex w-[22px] shrink-0 flex-col items-center rounded-lg bg-[#f5f5f5] pb-[2px] pt-1">
      <svg width="9" height="8" viewBox="0 0 9 8" fill="#6e6e6e">
        <path d="M4.500 0L9 8H0z" />
      </svg>
      <div className="mb-[31px] mt-1 w-2 flex-1 rounded-full bg-[#6e6e6e]" />
      <svg width="9" height="8" viewBox="0 0 9 8" fill="#6e6e6e">
        <path d="M4.500 8L9 0H0z" />
      </svg>
    </div>
  );
}

function SheetTabs() {
  return (
    <div className="flex h-8 shrink-0 items-start border-b border-[#c8c8c8] text-sm [font-feature-settings:normal]">
      <div className="flex h-[30px] w-[116px] items-center gap-[27px] pl-7">
        <button aria-label="前のシート">
          <svg width="6" height="10" viewBox="0 0 6 10" fill="none" stroke="#8a8a8a" strokeWidth="1.200">
            <path d="M5 1L1 5l4 4" />
          </svg>
        </button>
        <button aria-label="次のシート">
          <svg width="6" height="10" viewBox="0 0 6 10" fill="none" stroke="#8a8a8a" strokeWidth="1.200">
            <path d="M1 1l4 4-4 4" />
          </svg>
        </button>
      </div>
      <button className="h-7 w-[72px] rounded-b-md bg-white px-2 shadow-sm">
        <span className="block border-b-2 border-[#107c41] leading-[19px]">秋葉原店</span>
      </button>
      <Sep className="ml-[3px] mt-[5px]" />
      <button className="mt-[5px] w-[67px] leading-6">新宿店</button>
      <Sep className="mt-[5px]" />
      <button className="mt-[5px] w-[67px] leading-6">品川店</button>
      <div className="relative mt-[5px]">
        <button className="w-[94px] leading-6">全店舗集計</button>
        <span className="pointer-events-none absolute -left-[5px] -top-3 h-[45px] w-[105px] rounded-md border-[7px] border-[red] drop-shadow-[2px_3px_3px_rgba(0,0,0,0.6)]" />
        <Callout className="-top-[17px] left-[108px]">③</Callout>
      </div>
      <div className="ml-auto mt-[7px] flex items-center">
        <div className="flex flex-col gap-[3px] pr-[15px]">
          <span className="size-[2px] bg-[#333]" />
          <span className="size-[2px] bg-[#333]" />
          <span className="size-[2px] bg-[#333]" />
        </div>
        <div className="mr-5 flex h-[17px] w-[38vw] max-w-[728px] items-center rounded-full bg-[#f7f7f7] px-1">
          <svg width="8" height="10" viewBox="0 0 8 10" fill="#6e6e6e">
            <path d="M7 0v10L0 5z" />
          </svg>
          <div className="ml-1 mr-8 h-[9px] flex-1 rounded-full bg-[#6e6e6e]" />
          <svg width="8" height="10" viewBox="0 0 8 10" fill="#6e6e6e">
            <path d="M1 0v10l7-5z" />
          </svg>
        </div>
      </div>
    </div>
  );
}

function StatusBar() {
  return (
    <footer className="flex h-[22px] shrink-0 items-center bg-[#f4f4f4] pl-[7px] text-[12px]">
      <span className="text-[11px]">コピー先を選択し、Enter キーを押すか、貼り付けを選択します。</span>
      <div className="ml-auto flex h-full items-center">
        <div className="flex gap-[18px] whitespace-nowrap pr-[19px]">
          {stats.map((s) => (
            <span key={s}>{s}</span>
          ))}
        </div>
        <button className="flex h-full w-10 items-center justify-center bg-[#dcdcdc]" aria-label="標準">
          <Icon>
            <path stroke="#222" d="M1.500 2.500h13v11h-13zM1.500 6h13M1.500 10h13M6 2.500v11M10 2.500v11" />
          </Icon>
        </button>
        <button className="flex w-10 justify-center" aria-label="ページ レイアウト">
          <Icon>
            <path stroke="#222" d="M1.500 2.500h13v11.500h-13zM4.500 4.500h7V12h-7zM6 6.500h4M6 8.300h4M6 10h4" />
          </Icon>
        </button>
        <button className="flex w-10 justify-center" aria-label="改ページ プレビュー">
          <Icon>
            <path stroke="#222" d="M1.500 2.500h13v11.500h-13zM5.500 2.500v7M9.500 2.500v7M1.500 9.500h8" />
          </Icon>
        </button>
        <button className="ml-[6px] h-px w-2 bg-[#333]" aria-label="縮小" />
        <input
          type="range"
          aria-label="ズーム"
          min={10}
          max={190}
          defaultValue={100}
          className="ml-[5px] h-3 w-[100px] appearance-none bg-[linear-gradient(#666,#666)] bg-[length:100%_1px] bg-center bg-no-repeat [&::-webkit-slider-thumb]:h-[11px] [&::-webkit-slider-thumb]:w-1 [&::-webkit-slider-thumb]:appearance-none [&::-webkit-slider-thumb]:bg-[#555]"
        />
        <button className="ml-1" aria-label="拡大">
          <svg width="9" height="9" viewBox="0 0 9 9" stroke="#333">
            <path d="M.5 4.500h8M4.500.5v8" />
          </svg>
        </button>
        <button className="ml-[13px] mr-[21px]">100%</button>
      </div>
    </footer>
  );
}

export default function App() {
  return (
    <div className="flex h-screen flex-col overflow-hidden border border-t-0 border-[#107c41] bg-[#efefef] font-['Noto_Sans','Noto_Sans_CJK_JP',sans-serif] text-[12px] text-[#262626] [font-feature-settings:'palt']">
      <TitleBar />
      <TabBar />
      <Ribbon />
      <FormulaBar />
      <div className="flex min-h-0 flex-1">
        <Sheet />
        <VerticalScroll />
      </div>
      <SheetTabs />
      <StatusBar />
    </div>
  );
}
